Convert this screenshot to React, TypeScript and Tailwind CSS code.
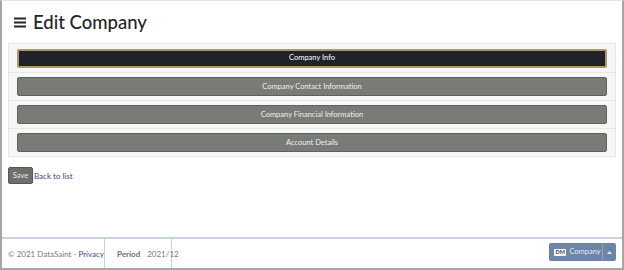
const sections = [
  "Company Info",
  "Company Contact Information",
  "Company Financial Information",
  "Account Details",
];

export default function App() {
  return (
    <div className="w-[624px] h-[270px] bg-white border-l-2 border-r-2 border-b-2 border-t border-l-[#a6a6a6] border-r-[#a6a6a6] border-b-[#a6a6a6] border-t-[#e4e4e4] flex flex-col font-['Lato',sans-serif] text-[#212529] overflow-hidden">
      <div className="flex-1 px-[6px]">
        <div className="flex items-center gap-[7px] pl-[6px] pt-[2px] h-[40px]">
          <svg width="12" height="11" viewBox="0 0 12 11">
            <rect x="0" y="0.5" width="12" height="2" fill="#212529" />
            <rect x="0" y="4.5" width="12" height="2" fill="#212529" />
            <rect x="0" y="8.5" width="12" height="2" fill="#212529" />
          </svg>
          <h1 className="text-[18.5px] font-medium leading-none">Edit Company</h1>
        </div>
        <div className="mt-[2px] border border-[#e6e6e6] bg-[#f7f7f7]">
          {sections.map((s, i) => (
            <div
              key={s}
              className={`h-[28px] flex items-center px-[8px] ${i > 0 ? "border-t border-[#e6e6e6]" : ""}`}
            >
              <button
                className={`w-full h-[19px] rounded-[2px] text-[7.5px] leading-none flex items-center justify-center ${
                  i === 0
                    ? "bg-[#1f2228] border-2 border-[#a89a62] text-white"
                    : "bg-[#787b76] border border-[#5d605b] text-[#eef0ec]"
                }`}
              >
                {s}
              </button>
            </div>
          ))}
        </div>
        <div className="flex items-center mt-[10px]">
          <button className="h-[17px] w-[25px] bg-[#6c706a] border border-[#55584f] rounded-[2px] text-[7.5px] text-[#e8eae5]">
            Save
          </button>
          <a className="text-[8px] text-[#3b4a7c] ml-[1px]">Back to list</a>
        </div>
      </div>
      <div className="h-[31px] border-t-2 border-[#c9d3df] flex items-center text-[8px] text-[#777b80]">
        <div className="w-[103px] h-full flex items-center pl-[6px] border-r border-[#c9d3df]">
          © 2021 DataSaint - <span className="text-[#3b4a7c] ml-[2px]">Privacy</span>
        </div>
        <div className="w-[67px] h-full flex items-center pl-[12px] border-r border-[#c9d3df]">
          <span className="font-bold text-[#6b6f74]">Period</span>
          <span className="ml-[7px]">2021/12</span>
        </div>
        <div className="flex-1" />
        <div className="mr-[6px] mt-[-3px] flex h-[18px] w-[67px] rounded-[2px] bg-[#6e85aa] text-[#e6ebf2]">
          <div className="flex-1 flex items-center pl-[5px] gap-[3px] text-[7.5px]">
            <span className="bg-white text-[#2d3a52] text-[5.5px] font-bold px-[1.5px] leading-[7px] rounded-[1px]">DM</span>
            <span>Company</span>
          </div>
          <div className="w-[1px] bg-[#8da0c0]" />
          <div className="w-[13px] flex items-center justify-center">
            <svg width="5" height="3" viewBox="0 0 5 3"><path d="M0 3 L2.5 0 L5 3 Z" fill="#e6ebf2" /></svg>
          </div>
        </div>
      </div>
    </div>
  );
}
